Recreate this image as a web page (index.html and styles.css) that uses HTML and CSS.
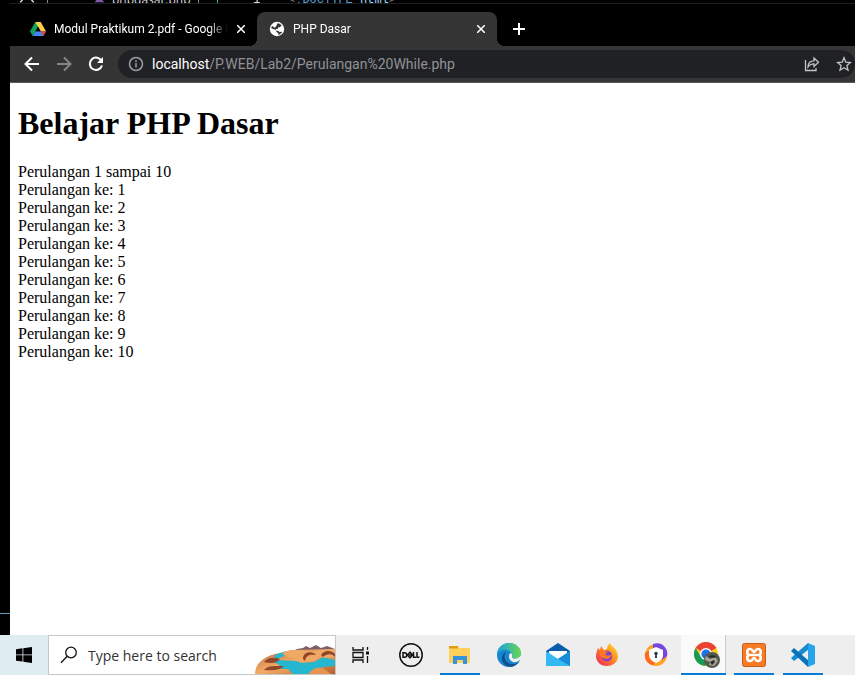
FILE: index.html
```html
<!DOCTYPE html>
<html lang="en">
<head>
<meta charset="utf-8">
<title>PHP Dasar</title>
<link rel="stylesheet" href="styles.css">
</head>
<body>
<div class="desktop">
  <div class="editor">
    <div class="editor-line" aria-hidden="true">
      <svg class="editor-ring" viewBox="0 0 20 4"><path d="M1 3L4 0M19 3L16 0" stroke="#ddd" stroke-width="2"/></svg>
      <span class="rule"></span>
      <svg class="editor-php" viewBox="0 0 14 4"><path d="M0 3L2 0h8l3 3z" fill="#8458a8"/></svg>
      <span class="editor-file">phpdasar.php</span>
      <span class="rule"></span>
      <span class="rule blue"></span>
      <span class="editor-number">1</span>
      <span class="editor-code"><i>&lt;!</i>DOCTYPE <b>html</b><i>&gt;</i></span>
    </div>
    <div class="marker"></div>
  </div>
  <div class="browser">
    <nav class="tabs">
      <div class="tab">
        <svg class="favicon" viewBox="0 0 16 16"><path d="M5.3 1h5.4L5.4 10.4 2.7 15 0 10.2z" fill="#13a15a"/><path d="M5.3 1h5.4L16 10.2h-5.3z" fill="#ffcf48"/><path d="M2.7 15l2.7-4.8H16L13.3 15z" fill="#4285f4"/><path d="M8 5.800l2.500 4.400h-5z" fill="#000"/><path d="M10.700 10.200H16L13.300 15z" fill="#e94235"/></svg>
        <a class="tab-title" href="#drive">Modul Praktikum 2.pdf - Google Drive</a>
        <button class="close" aria-label="Close tab"><svg viewBox="0 0 8 8"><path d="M0 0l8 8M8 0L0 8"/></svg></button>
      </div>
      <div class="tab active">
        <svg class="favicon" viewBox="0 0 16 16"><circle cx="8" cy="8" r="7.200" fill="#fff"/><path d="M8.500 2.300c2 .2 3.300 1 4.300 2.200l-2.300 1.700-1.500.3v1.300l-2 .2-.5 1.500 2.500.2 1.500 1.300 2.700-.2c-.8 1.700-2.200 2.700-4 3.100l.2-1.700-2-1.200-.4-2L2.200 7.200c.2-1 .5-1.700 1-2.300l2.500 1.800 1.500-1.500z" fill="#353535"/></svg>
        <a class="tab-title" href="#page">PHP Dasar</a>
        <button class="close" aria-label="Close tab"><svg viewBox="0 0 8 8"><path d="M0 0l8 8M8 0L0 8"/></svg></button>
      </div>
      <button class="new-tab" aria-label="New tab"><svg viewBox="0 0 12 12"><path d="M6 0v12M0 6h12"/></svg></button>
    </nav>
    <div class="toolbar">
      <button class="nav-button" aria-label="Back"><svg viewBox="0 0 16 16"><path d="M15 8H2M8 1.5L1.5 8 8 14.5"/></svg></button>
      <button class="nav-button muted" aria-label="Forward"><svg viewBox="0 0 16 16"><path d="M1 8h13M8 1.5L14.5 8 8 14.5"/></svg></button>
      <button class="nav-button" aria-label="Reload"><svg viewBox="0 0 16 16"><path d="M13.6 5A6.2 6.2 0 1 0 14 9.5"/><path d="M15 1v6H9z" fill="#fff" stroke="none"/></svg></button>
      <div class="address">
        <svg class="info" viewBox="0 0 16 16"><circle cx="8" cy="8" r="6.5"/><path d="M8 7v4.500M8 4.300v1.600"/></svg>
        <a class="url" href="#page"><span>localhost</span>/P.WEB/Lab2/Perulangan%20While.php</a>
        <button class="address-button" aria-label="Share"><svg viewBox="0 0 16 16"><path d="M1.500 4v10.500H12V12M4 11c0-4 2-6.200 6-6.200V2l4.500 4.200L10 10.500V7.800C7 7.800 5.500 8.500 4 11z"/></svg></button>
        <button class="address-button" aria-label="Bookmark"><svg viewBox="0 0 16 16"><path d="M8 1.800l1.800 4.400 4.700.3-3.600 3.100 1.100 4.600L8 11.700l-4 2.500 1.100-4.600L1.500 6.500l4.700-.3z"/></svg></button>
      </div>
    </div>
    <main class="page">
      <h1>Belajar PHP Dasar</h1>
      Perulangan 1 sampai 10<br>
      Perulangan ke: 1<br>Perulangan ke: 2<br>Perulangan ke: 3<br>Perulangan ke: 4<br>Perulangan ke: 5<br>Perulangan ke: 6<br>Perulangan ke: 7<br>Perulangan ke: 8<br>Perulangan ke: 9<br>Perulangan ke: 10
    </main>
  </div>
</div>
<footer class="taskbar">
  <button class="start" aria-label="Start"><svg viewBox="0 0 16 16"><path d="M0 2.200L6.500 1.300V7.500H0zM7.300 1.200L16 0v7.500H7.300zM0 8.300h6.500v6.300L0 13.700zM7.300 8.300H16V16l-8.700-1.200z"/></svg></button>
  <div class="search">
    <svg class="lens" viewBox="0 0 18 18"><circle cx="11" cy="6.500" r="5.300"/><path d="M7.200 10.300L1 16.800"/></svg>
    <input type="text" aria-label="Search" placeholder="Type here to search">
    <svg class="scenery" viewBox="0 0 80 29">
      <defs><linearGradient id="rock" x2="1" y2="1"><stop stop-color="#bd6b3f"/><stop offset=".5" stop-color="#f3ac66"/><stop offset="1" stop-color="#b65d31"/></linearGradient></defs>
      <path d="M36 7l6-3 6-1 3-2 4 2 6-3 5 3 6-2 8 3v7H36z" fill="#806068"/>
      <path d="M0 29c0-10 8-17 20-20L38 5l42-1v25z" fill="url(#rock)"/>
      <path d="M20 10l11-4-2 5-8 4 20 1 6 2 12-1 9-5 12 3v6l-13 1 4 7H38l-5-5-16 0 8-4-7-3z" fill="#25b7cf"/>
      <path d="M35 5l12 0 9 2 9-2 15 0v7l-10 1-6-2-5 5-12 1c0-3-5-5-9-4l-6-1-5-4z" fill="#efa865"/>
      <path d="M48 14c0-8 10-8 13-4-6-1-10 0-11 6zM66 10c4-6 11-4 14-1v3c-4-4-8-3-12 0M9 17c4-5 10-5 16-3-3 4-9 5-16 3M9 25c4-5 10-4 20-4-4 4-10 5-20 4" fill="#914727"/>
      <path d="M55 27c3-4 8-5 13-4l8 6H53z" fill="#e69551"/>
    </svg>
  </div>
  <div class="apps">
    <button class="app" aria-label="Task view"><svg viewBox="0 0 24 24"><path d="M3 4v3h10V4M3 20v-3h10v3M3 9.500h10v5H3zM17.500 4v3M17.500 13v7" fill="none" stroke="#111" stroke-width="1.300"/><path d="M16 8.500h3v3h-3z" fill="#111"/></svg></button>
    <button class="app" aria-label="Dell"><svg viewBox="0 0 24 24"><circle cx="12" cy="12" r="11.200" fill="none" stroke="#111" stroke-width="1.500"/><path d="M4 9.700h1.500q2.300 0 2.300 2.300t-2.300 2.300H4zM11 9.200L8.500 12l2.500 2.800 2.500-2.800zM10 12h3M14.500 9v5.300H17M18 9v5.300h2.500" fill="none" stroke="#111" stroke-width="1.500"/></svg></button>
    <button class="app running" aria-label="File Explorer"><svg viewBox="0 0 24 24"><path d="M1 3h9l1 2h11v15H1z" fill="#ffd15c"/><path d="M1 3h9v2.500H1z" fill="#e29b0c"/><path d="M5 21v-8h14v8h-4v-4H9v4z" fill="#3592dc"/></svg></button>
    <button class="app" aria-label="Microsoft Edge"><svg viewBox="0 0 24 24"><defs><linearGradient id="sea"><stop stop-color="#1c9fe3"/><stop offset="1" stop-color="#65d94e"/></linearGradient></defs><circle cx="12" cy="12" r="12" fill="#1686cf"/><path d="M0 11C1 4 6 0 12 0c7 0 12 5 12 10 0 5-6 7-9 5-1-1 1-2 0-4C13 6 5 5 0 11z" fill="url(#sea)"/><path d="M9 9c-4 6 1 13 8 12 3 0 5-2 6-4-3 7-11 9-16 4C3 16 5 10 9 9z" fill="#114f91"/><path d="M14 10c-3 1-3 7 2 9 3 1 6-1 8-3v-4c-3 5-9 4-9 2 0-1 1-2-1-4z" fill="#eee"/></svg></button>
    <button class="app" aria-label="Mail"><svg viewBox="0 0 24 24"><path d="M0 8l12-8 12 8v15H0z" fill="#0b5cad"/><path d="M3 8h18v8H3z" fill="#fff"/><path d="M0 8l12 8 12-8v15H0z" fill="#36b8f2"/><path d="M9 14l15 9V8l-12 8z" fill="#168bd7"/></svg></button>
    <button class="app" aria-label="Firefox"><svg viewBox="0 0 24 24"><defs><linearGradient id="fire" x1="1" x2="0" y2="1"><stop stop-color="#ffed38"/><stop offset=".45" stop-color="#ff8a20"/><stop offset="1" stop-color="#ed1b65"/></linearGradient></defs><path d="M3 5l2 2 1-4 3 4 3-1c0-3 2-5 3-6 1 3 4 4 6 7 5 8 0 16-9 16C5 23 1 18 1 13c0-3 1-5 2-8z" fill="url(#fire)"/><circle cx="12" cy="13" r="5.200" fill="#8140cb"/><path d="M5 8c3-2 5 1 8 1l-3 2c2 3 6 1 7 0-1 6-9 7-12 0z" fill="#ff7820"/></svg></button>
    <button class="app" aria-label="Secure browser"><svg viewBox="0 0 24 24"><circle cx="12" cy="12" r="11" fill="#ffa226"/><path d="M9 1c9-3 16 5 14 12l-5 4C20 10 16 5 9 5z" fill="#7648df"/><path d="M1 10l5-3c-2 7 1 11 6 12l-3 3C3 21 0 16 1 10z" fill="#ff681e"/><path d="M12 4l7 3v5c0 4-4 7-7 8-3-1-7-4-7-8V7z" fill="#fff"/><circle cx="12" cy="10.500" r="1.700" fill="#29364a"/><path d="M11.300 11h1.400l.4 4h-2.200z" fill="#29364a"/></svg></button>
    <button class="app running selected" aria-label="Google Chrome"><svg viewBox="0 0 26 26"><circle cx="12" cy="12" r="12" fill="#ffca28"/><path d="M12 12L1.600 6A12 12 0 0 1 22.400 6z" fill="#ea4335"/><path d="M1.600 6A12 12 0 0 0 11 24l6-9H7z" fill="#169b56"/><circle cx="12" cy="12" r="6" fill="#fff"/><circle cx="12" cy="12" r="4.600" fill="#1a73e8"/><circle cx="18" cy="18" r="8" fill="#555a50"/><path d="M12 14l4 3 5-2 3 4-4 5-5-1 1-3-5-2z" fill="#aaa597"/><path d="M14 15l3-2 6 1-3 2zM16 20l4-2 1 2-3 3z" fill="#27302f"/></svg></button>
    <button class="app running" aria-label="XAMPP"><svg viewBox="0 0 24 24"><rect x=".5" y=".5" width="23" height="23" rx="2" fill="#f67b24" stroke="#c95d14"/><path d="M8 6C4.500 6 4.500 11 7 12c-2.500 1-2.500 6 1 6 3 0 2.500-3 4-3s1 3 4 3c3.500 0 3.500-5 1-6 2.500-1 2.500-6-1-6-3 0-2.500 3-4 3S11 6 8 6zM8.500 12h7" fill="none" stroke="#fff" stroke-width="2.600"/></svg></button>
    <button class="app running" aria-label="Visual Studio Code"><svg viewBox="0 0 24 24"><path d="M17 0L0 15l3 3L18 6z" fill="#168bd2"/><path d="M0 8l3-3 15 13-1 6z" fill="#0873b7"/><path d="M17 0l7 3v18l-7 3z" fill="#27a4eb"/></svg></button>
  </div>
</footer>
</body>
</html>
```

FILE: styles.css
```css
* { box-sizing: border-box; }
body { margin: 0; min-height: 100vh; display: flex; flex-direction: column; background: #000; font-family: "Open Sans", "Noto Sans", sans-serif; }
button { border: 0; padding: 0; background: transparent; display: grid; place-items: center; flex: none; }
a { color: inherit; text-decoration: none; }
svg { display: block; flex: none; }
.desktop { position: relative; flex: 1; display: flex; flex-direction: column; padding-left: 10px; }
.editor { height: 4px; border-bottom: 1px solid #202020; }
.editor-line { height: 3px; overflow: hidden; display: grid; grid-template-columns: 29px 46px 19px 86px 19px 36px 35px 1fr; grid-template-rows: 3px; align-items: end; padding-left: 8px; font: 12px/12px "Liberation Mono", monospace; color: #ddd; white-space: nowrap; }
.editor-line span { margin-bottom: -3px; }
.editor-ring { width: 18px; height: 3px; }
.rule { width: 1px; height: 6px; background: #888; }
.editor-php { width: 14px; height: 3px; }
.editor-file { font-family: "Open Sans", sans-serif; }
.rule.blue { background: #5aa1b9; }
.editor-code { color: #569cd6; }
.editor-code i { font-style: normal; color: #808080; }
.editor-code b { font-weight: 400; color: #9cdcfe; }
.marker { position: absolute; left: 0; bottom: 21px; width: 10px; height: 1px; background: #5aa1b9; }
.browser { flex: 1; display: flex; flex-direction: column; min-width: 0; }
.tabs { height: 42px; padding: 8px 0 0 7px; display: flex; background: #000; }
.tab { position: relative; width: 240px; height: 34px; display: flex; align-items: center; padding: 0 11px 0 13px; gap: 8px; color: #fff; font: 12px/16px Roboto, sans-serif; }
.tab.active { background: #353535; border-radius: 8px 8px 0 0; padding-left: 12px; }
.tab.active::before, .tab.active::after { content: ""; position: absolute; bottom: 0; width: 8px; height: 8px; }
.tab.active::before { right: 100%; background: radial-gradient(circle at 0 0, transparent 8px, #353535 8px); }
.tab.active::after { left: 100%; background: radial-gradient(circle at 100% 0, transparent 8px, #353535 8px); }
.favicon { width: 16px; height: 16px; }
.tab-title { flex: 1; overflow: hidden; white-space: nowrap; mask-image: linear-gradient(to left, transparent, #000 20px); }
.close { width: 10px; height: 16px; }
.close svg { width: 8px; height: 8px; stroke: #fff; stroke-width: 1.5; }
.new-tab { width: 44px; height: 34px; }
.new-tab svg { width: 12px; height: 12px; stroke: #fff; stroke-width: 2; }
.toolbar { height: 37px; padding: 0 0 1px 6px; display: flex; align-items: center; background: #353535; border-bottom: 1px solid #5b5b5b; }
.nav-button { width: 32px; height: 32px; }
.nav-button svg { width: 16px; height: 16px; fill: none; stroke: #fff; stroke-width: 2; }
.nav-button.muted svg { stroke: #858585; }
.address { flex: 1; min-width: 0; height: 28px; margin-left: 6px; border-radius: 14px; background: #202124; display: flex; align-items: center; padding: 0 3px 0 10px; }
.info { width: 16px; height: 16px; fill: none; stroke: #9aa0a6; stroke-width: 1.5; }
.url { flex: 1; margin-left: 8px; font: 14px/20px Roboto, sans-serif; color: #8f9296; white-space: nowrap; overflow: hidden; }
.url span { color: #fff; }
.address-button { width: 16px; height: 28px; margin-left: 16px; }
.address-button svg { width: 16px; height: 16px; fill: none; stroke: #c4c6ca; stroke-width: 1.3; }
.page { flex: 1; background: #fff; color: #000; padding: 1px 8px 0; font: 16px/18px "Liberation Serif", serif; }
.page h1 { margin: 21px 0; font-size: 32px; line-height: 37px; }
.taskbar { height: 40px; flex: none; display: flex; background: #eee; }
.start { width: 48px; height: 40px; background: #dfecf2; }
.start svg { width: 16px; height: 16px; }
.search { width: 288px; height: 40px; flex: none; display: flex; align-items: center; border: 1px solid #c6c6c6; background: #fff; padding-left: 11px; }
.lens { width: 18px; height: 18px; fill: none; stroke: #111; stroke-width: 1.3; }
.search input { flex: 1; min-width: 0; border: 0; outline: 0; margin-left: 10px; padding: 2px 0 0; background: transparent; font: 14px/20px "Open Sans", sans-serif; }
.search input::placeholder { color: #333; opacity: 1; }
.scenery { width: 80px; height: 29px; align-self: flex-end; }
.apps { flex: 1; display: flex; gap: 9px; padding-left: 6px; min-width: 0; overflow: hidden; }
.app { width: 40px; height: 40px; padding-top: 2px; border-bottom: 2px solid transparent; }
.app svg { width: 24px; height: 24px; }
.app.running { border-color: #087bd4; }
.app.selected { width: 45px; margin: 0 -1px 0 -4px; padding-left: 6px; background: #fafafa; box-shadow: inset -1px 0 #c9cdd0; }
.app.selected svg { width: 26px; height: 26px; }
```
